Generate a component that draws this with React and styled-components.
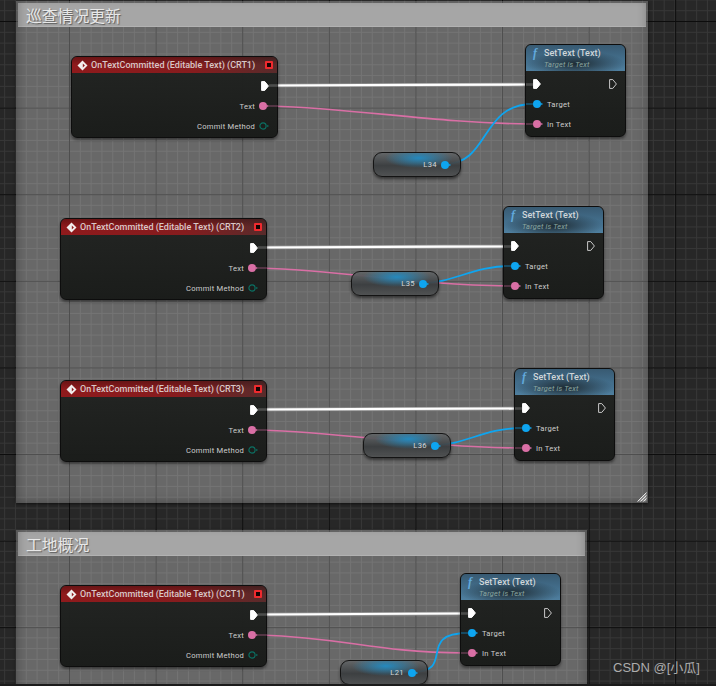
import React from "react";
import styled, { createGlobalStyle } from "styled-components";

const MAJOR = 86.6;
const MINOR = MAJOR / 8;
const GRID_X = 69;
const GRID_Y = 21;

const GlobalStyle = createGlobalStyle`
  html, body { margin: 0; padding: 0; background: #1b1b1b; }
  body { font-family: Roboto, "Liberation Sans", sans-serif; }
`;

// grid is anchored to the canvas, so comment boxes pass their own offset
const gridLines = (minor, major, x = 0, y = 0) => `
  linear-gradient(to right, ${major} 1px, transparent 1px) ${GRID_X - x}px 0 / ${MAJOR}px ${MAJOR}px,
  linear-gradient(to bottom, ${major} 1px, transparent 1px) 0 ${GRID_Y - y}px / ${MAJOR}px ${MAJOR}px,
  linear-gradient(to right, ${minor} 1px, transparent 1px) ${GRID_X - x}px 0 / ${MINOR}px ${MINOR}px,
  linear-gradient(to bottom, ${minor} 1px, transparent 1px) 0 ${GRID_Y - y}px / ${MINOR}px ${MINOR}px
`;

const Canvas = styled.div`
  position: relative;
  width: 716px;
  height: 684px;
  overflow: hidden;
  background: ${gridLines("#373737", "#0c0c0c")}, #272727;
`;

const CommentBox = styled.section`
  position: absolute;
  left: ${(p) => p.$x}px;
  top: ${(p) => p.$y}px;
  width: ${(p) => p.$w}px;
  height: ${(p) => p.$h}px;
  box-sizing: border-box;
  padding: 2px 2px 0 2px;
  box-shadow: 0 1px 3px rgba(0, 0, 0, 0.6);
  background: ${(p) => gridLines("#747474", "#4e4e4e", p.$x, p.$y)}, #686868;
  &::after {
    content: "";
    position: absolute;
    inset: 0;
    pointer-events: none;
    box-shadow: inset 5px 0 8px -3px rgba(30, 30, 30, 0.3), inset -5px -5px 8px -3px rgba(30, 30, 30, 0.25);
  }
`;

const CommentTitle = styled.h2`
  margin: 0;
  height: 24px;
  padding-left: 8px;
  background: #a6a6a6;
  border-bottom: 1px solid #b2b2b2;
  box-sizing: border-box;
  color: #e8e8e8;
  font: 400 15.8px/25px "Noto Sans CJK SC", sans-serif;
  text-shadow: 1px 1px 1px #5c5c5c;
`;

const Grip = styled.svg`
  position: absolute;
  right: 1px;
  bottom: 1px;
  z-index: 1;
`;

const Wires = styled.svg`
  position: absolute;
  left: 0;
  top: 0;
`;

const NodeShell = styled.div`
  position: absolute;
  left: ${(p) => p.$x}px;
  top: ${(p) => p.$y}px;
  box-sizing: border-box;
  width: ${(p) => p.$w}px;
  height: ${(p) => p.$h}px;
  border: 1px solid #0d0d0d;
  border-radius: 6px;
  overflow: hidden;
  background: linear-gradient(rgba(33, 35, 33, 0.97), rgba(25, 27, 25, 0.98));
  box-shadow: 0 2px 3px rgba(0, 0, 0, 0.45);
`;

const EventHeader = styled.header`
  display: flex;
  align-items: center;
  height: 16px;
  padding: 0 4px 0 5px;
  background:
    linear-gradient(rgba(0, 0, 0, 0.26), transparent 50%),
    linear-gradient(to right, #8f1a1c 0%, #861c1e 60%, #582b2b 100%);
  color: #d8c8c8;
  font-size: 9px;
  font-weight: 500;
  white-space: nowrap;
`;

const EventTitle = styled.span`
  flex: 1;
  margin-left: 3px;
`;

const StopBox = styled.span`
  width: 4px;
  height: 4px;
  background: #160404;
  border: 2px solid #ee2a2e;
  border-radius: 1px;
`;

const Rows = styled.div`
  display: flex;
  flex-direction: column;
  padding-top: ${(p) => p.$top}px;
`;

const Row = styled.div`
  display: flex;
  align-items: center;
  justify-content: ${(p) => (p.$spread ? "space-between" : p.$end ? "flex-end" : "flex-start")};
  height: 20px;
  gap: 4px;
  padding: ${(p) => (p.$end ? "0 8px 0 0" : "0 8px 0 7px")};
  color: #cdcdcd;
  font-size: 7.6px;
  letter-spacing: 0.25px;
`;

const FunctionHeader = styled.header`
  display: flex;
  flex-direction: column;
  box-sizing: border-box;
  height: 26px;
  padding: 2px 0 0 18px;
  position: relative;
  background:
    radial-gradient(ellipse 50px 13px at 50% 72%, rgba(26, 36, 42, 0.9), transparent),
    linear-gradient(#385a72, #44708e 60%, #4f7f9f);
  white-space: nowrap;
`;

const FunctionGlyph = styled.span`
  position: absolute;
  left: 7px;
  top: 1px;
  color: #62a9dc;
  font: italic 700 12px "Liberation Serif", serif;
`;

const FunctionTitle = styled.span`
  color: #d0d6d9;
  font-size: 9px;
  font-weight: 500;
  line-height: 12px;
`;

const FunctionSubtitle = styled.span`
  color: #8aa6a0;
  font-size: 7.4px;
  font-style: italic;
  line-height: 11px;
  letter-spacing: 0.2px;
`;

const VarShell = styled.div`
  position: absolute;
  left: ${(p) => p.$x}px;
  top: ${(p) => p.$y}px;
  box-sizing: border-box;
  width: 88px;
  height: 25px;
  display: flex;
  align-items: center;
  justify-content: flex-end;
  gap: 4px;
  padding: 0 9px 0 0;
  border: 1px solid #141414;
  border-radius: 9px;
  color: #d6d6d6;
  font-size: 7.6px;
  letter-spacing: 0.4px;
  background:
    radial-gradient(ellipse 34px 10px at 52% 5px, rgba(34, 140, 195, 0.95), transparent),
    linear-gradient(rgba(98, 101, 103, 0.94), rgba(58, 61, 63, 0.94) 55%, rgba(78, 80, 81, 0.94));
  box-shadow: 0 2px 3px rgba(0, 0, 0, 0.5);
`;

const Watermark = styled.div`
  position: absolute;
  left: 613px;
  top: 659px;
  color: #adadad;
  font: 400 13px/18px "Liberation Sans", "Noto Sans CJK SC", sans-serif;
`;

const ExecPin = ({ hollow }) => (
  <svg width="8" height="10" viewBox="0 0 8 10">
    <path
      d="M.6.6h3.2L7.4 5 3.8 9.4H.6z"
      fill={hollow ? "none" : "#fff"}
      stroke={hollow ? "#c8c8c8" : "#fff"}
      strokeWidth="1"
      strokeLinejoin="round"
    />
  </svg>
);

const DataPin = ({ color, hollow }) => (
  <svg width="10" height="8" viewBox="0 0 10 8">
    <circle cx="4" cy="4" r={hollow ? 3.1 : 4} fill={hollow ? "none" : color} stroke={color} strokeWidth={hollow ? 1.2 : 0} />
    <path d="M8.2 2.8 10 4 8.2 5.2z" fill={color} />
  </svg>
);

const EventIcon = () => (
  <svg width="11" height="11" viewBox="0 0 11 11">
    <path d="M5.5.5l5 5-5 5-5-5z" fill="#f2eeee" />
    <path d="M5.8 3.4 7.9 5.5 5.8 7.6z" fill="#8e1c1e" />
  </svg>
);

const PINK = "#d96fa5";
const BLUE = "#0ea5f0";
const TEAL = "#0b6f62";

const EventNode = ({ x, y, name }) => (
  <NodeShell $x={x} $y={y} $w={207} $h={82}>
    <EventHeader>
      <EventIcon />
      <EventTitle>OnTextCommitted (Editable Text) ({name})</EventTitle>
      <StopBox />
    </EventHeader>
    <Rows $top={3}>
      <Row $end>
        <ExecPin />
      </Row>
      <Row $end>
        Text
        <DataPin color={PINK} />
      </Row>
      <Row $end>
        Commit Method
        <DataPin color={TEAL} hollow />
      </Row>
    </Rows>
  </NodeShell>
);

const SetTextNode = ({ x, y }) => (
  <NodeShell $x={x} $y={y} $w={101} $h={93}>
    <FunctionHeader>
      <FunctionGlyph>f</FunctionGlyph>
      <FunctionTitle>SetText (Text)</FunctionTitle>
      <FunctionSubtitle>Target is Text</FunctionSubtitle>
    </FunctionHeader>
    <Rows $top={3}>
      <Row $spread>
        <ExecPin />
        <ExecPin hollow />
      </Row>
      <Row>
        <DataPin color={BLUE} />
        Target
      </Row>
      <Row>
        <DataPin color={PINK} />
        In Text
      </Row>
    </Rows>
  </NodeShell>
);

const VarNode = ({ x, y, name }) => (
  <VarShell $x={x} $y={y}>
    {name}
    <DataPin color={BLUE} />
  </VarShell>
);

const WireGroup = ({ event, set, varNode, crossed }) => {
  const execY = event.y + 29.5;
  const textY = event.y + 50;
  const setExecY = set.y + 40.5;
  const targetY = set.y + 60;
  const inY = set.y + 80;
  const vx = varNode.x + 72;
  const vy = varNode.y + 12;
  const spread = crossed ? 30 : 45;
  const execPath = `M${event.x + 200} ${execY}C${event.x + 280} ${execY} ${set.x - 80} ${setExecY} ${set.x + 2} ${setExecY}`;
  return (
    <>
      <path d={execPath} stroke="#9a9a9a" strokeWidth="3.6" fill="none" />
      <path d={execPath} stroke="#fff" strokeWidth="2.2" fill="none" />
      <path
        d={`M${event.x + 200} ${textY}C${event.x + 290} ${textY + 3} ${set.x - 90} ${inY - 1} ${set.x + 5} ${inY}`}
        stroke={PINK}
        strokeWidth="1.6"
        fill="none"
      />
      <path
        d={`M${vx} ${vy}C${vx + spread} ${vy} ${set.x - spread} ${targetY} ${set.x + 8} ${targetY}`}
        stroke={BLUE}
        strokeWidth="1.8"
        fill="none"
      />
    </>
  );
};

// wires fade where they run over a node, between its edge and the pin
const WireTails = ({ event, set }) => {
  const tails = [
    [event.x + 198, event.x + 207, event.y + 29.5, "#8a8a8a", 2.6],
    [event.x + 198, event.x + 207, event.y + 50, PINK, 1.4],
    [set.x + 1, set.x + 8, set.y + 40.5, "#8a8a8a", 2.6],
    [set.x + 1, set.x + 8, set.y + 60, BLUE, 1.6],
    [set.x + 1, set.x + 8, set.y + 80, PINK, 1.4],
  ];
  return tails.map(([from, to, y, color, width]) => (
    <path key={`${from}-${y}`} d={`M${from} ${y}H${to}`} stroke={color} strokeWidth={width} opacity="0.4" fill="none" />
  ));
};

const groups = [
  { event: { x: 71, y: 56, name: "CRT1" }, set: { x: 525, y: 44 }, varNode: { x: 373, y: 152, name: "L34" } },
  { event: { x: 60, y: 218, name: "CRT2" }, set: { x: 503, y: 206 }, varNode: { x: 351, y: 271, name: "L35" }, crossed: true },
  { event: { x: 60, y: 380, name: "CRT3" }, set: { x: 514, y: 368 }, varNode: { x: 363, y: 433, name: "L36" }, crossed: true },
  { event: { x: 60, y: 585, name: "CCT1" }, set: { x: 460, y: 573 }, varNode: { x: 340, y: 660, name: "L21" } },
];

export default function App() {
  return (
    <>
      <GlobalStyle />
      <Canvas>
        <CommentBox $x={16} $y={1} $w={632} $h={502}>
          <CommentTitle>巡查情况更新</CommentTitle>
          <Grip width="10" height="10" viewBox="0 0 10 10">
            <path d="M9.5.5v9H.5z" fill="#8c8c8c" />
            <path d="M9.5 .5 .5 9.5M9.5 3.5 3.5 9.5M9.5 6.5 6.5 9.5" stroke="#e2e2e2" strokeWidth="1" fill="none" />
          </Grip>
        </CommentBox>
        <CommentBox $x={16} $y={530} $w={571} $h={160}>
          <CommentTitle>工地概况</CommentTitle>
        </CommentBox>
        <Wires width="716" height="684" viewBox="0 0 716 684">
          {groups.map((g) => (
            <WireGroup key={g.event.name} {...g} />
          ))}
        </Wires>
        {groups.map((g) => (
          <React.Fragment key={g.event.name}>
            <EventNode {...g.event} />
            <SetTextNode {...g.set} />
            <VarNode {...g.varNode} />
          </React.Fragment>
        ))}
        <Wires width="716" height="684" viewBox="0 0 716 684">
          {groups.map((g) => (
            <WireTails key={g.event.name} {...g} />
          ))}
        </Wires>
        <Watermark>CSDN @[小瓜]</Watermark>
      </Canvas>
    </>
  );
}
